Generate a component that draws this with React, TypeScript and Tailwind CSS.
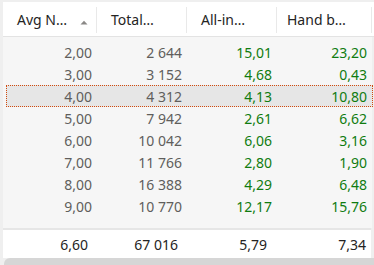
import React from 'react'

const rows = [
  { avg: '2,00', total: '2 644', allIn: '15,01', hand: '23,20' },
  { avg: '3,00', total: '3 152', allIn: '4,68', hand: '0,43' },
  { avg: '4,00', total: '4 312', allIn: '4,13', hand: '10,80', selected: true },
  { avg: '5,00', total: '7 942', allIn: '2,61', hand: '6,62' },
  { avg: '6,00', total: '10 042', allIn: '6,06', hand: '3,16' },
  { avg: '7,00', total: '11 766', allIn: '2,80', hand: '1,90' },
  { avg: '8,00', total: '16 388', allIn: '4,29', hand: '6,48' },
  { avg: '9,00', total: '10 770', allIn: '12,17', hand: '15,76' },
]

const font = { fontFamily: '"Noto Sans", "Open Sans", sans-serif' }

function HeaderCell({ label, sorted, last }: { label: string; sorted?: boolean; last?: boolean }) {
  return (
    <div className={`relative flex h-full items-center ${last ? 'pl-[10px]' : 'pl-[14px]'}`}>
      <span className="text-[14px] text-[#252423] whitespace-nowrap">{label}</span>
      {sorted && (
        <svg className="absolute left-[77px] top-[18px]" width="8" height="5" viewBox="0 0 8 5">
          <path d="M0.5 4.5 L4 0.8 L7.5 4.5 Z" fill="#8a8886" />
        </svg>
      )}
      <div className="absolute right-0 top-[5px] bottom-[3px] w-px bg-[#e9e9e9]" />
    </div>
  )
}

export default function App() {
  return (
    <div className="w-[374px] h-[265px] overflow-hidden bg-[#efefef] pt-[2px]" style={font}>
      {/* header */}
      <div className="ml-[3px] h-[35px] bg-white border-b border-[#e3e3e3] grid grid-cols-[94px_90px_90px_95px_2px]">
        <HeaderCell label="Avg N…" sorted />
        <HeaderCell label="Total…" />
        <HeaderCell label="All-in…" />
        <HeaderCell label="Hand b…" last />
        <div />
      </div>

      {/* body */}
      <div className="ml-[3px] mr-[2px] h-[191px] bg-[#f6f6f6] pt-[4px]">
        {rows.map((r, i) => (
          <div
            key={i}
            className={`ml-[3px] mr-[-1px] h-[22px] grid grid-cols-[91px_90px_90px_92px] items-center text-[14px] border ${
              r.selected ? 'border-dotted border-[#d14b0f] bg-[#e6e6e6]' : 'border-transparent'
            }`}
          >
            <div className="text-right pr-[6px] text-[#605e5c]">{r.avg}</div>
            <div className="text-right pr-[6px] text-[#605e5c]">{r.total}</div>
            <div className="text-right pr-[6px] text-[#107c10]">{r.allIn}</div>
            <div className="text-right pr-[3px] text-[#107c10]">{r.hand}</div>
          </div>
        ))}
      </div>

      {/* totals */}
      <div className="ml-[3px] mr-[3px] h-[30px] bg-white border-t-2 border-[#e6e6e6] grid grid-cols-[94px_90px_90px_94px] items-center text-[14px] text-[#252423]">
        <div className="text-right pr-[9px]">6,60</div>
        <div className="text-right pr-[9px]">67 016</div>
        <div className="text-right pr-[10px]">5,79</div>
        <div className="text-right pr-[5px]">7,34</div>
      </div>

      {/* scrollbar */}
      <div className="ml-[4px] h-[10px] bg-[#d6d6d6] rounded-tl-[6px]" />
    </div>
  )
}
